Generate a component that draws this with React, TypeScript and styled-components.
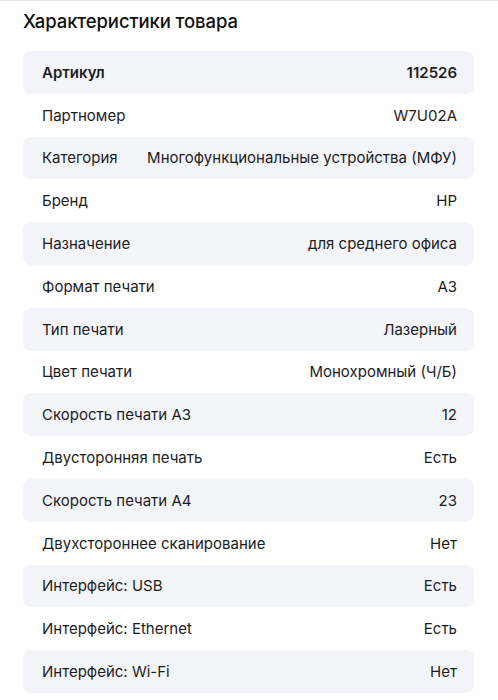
import React from "react";
import styled, { createGlobalStyle } from "styled-components";

const rows: [string, string][] = [
  ["Артикул", "112526"],
  ["Партномер", "W7U02A"],
  ["Категория", "Многофункциональные устройства (МФУ)"],
  ["Бренд", "HP"],
  ["Назначение", "для среднего офиса"],
  ["Формат печати", "A3"],
  ["Тип печати", "Лазерный"],
  ["Цвет печати", "Монохромный (Ч/Б)"],
  ["Скорость печати A3", "12"],
  ["Двусторонняя печать", "Есть"],
  ["Скорость печати A4", "23"],
  ["Двухстороннее сканирование", "Нет"],
  ["Интерфейс: USB", "Есть"],
  ["Интерфейс: Ethernet", "Есть"],
  ["Интерфейс: Wi-Fi", "Нет"],
];

const App = () => {
  return (
    <>
      <GlobalStyle />
      <Page>
        <Title>Характеристики товара</Title>
        <List>
          {rows.map(([label, value], i) => (
            <Row key={label} $striped={i % 2 === 0}>
              <Label $bold={i === 0}>{label}</Label>
              <Value $bold={i === 0}>{value}</Value>
            </Row>
          ))}
        </List>
      </Page>
    </>
  );
};

export default App;

const GlobalStyle = createGlobalStyle`
  body {
    margin: 0;
    background: #fff;
    font-family: Inter, "Noto Sans", sans-serif;
    color: #1c1c1e;
  }
`;

const Page = styled.div`
  border-top: 1px solid #e6e6e6;
  padding: 0 24px 0 23px;
`;

const Title = styled.h2`
  margin: 0;
  padding-top: 9px;
  height: 50px;
  box-sizing: border-box;
  font-size: 18.5px;
  font-weight: 500;
  letter-spacing: -0.1px;
  color: #111;
`;

const List = styled.div`
  display: flex;
  flex-direction: column;
`;

const Row = styled.div<{ $striped: boolean }>`
  display: flex;
  align-items: center;
  justify-content: space-between;
  gap: 16px;
  height: 42.8px;
  padding: 0 17px 0 19px;
  border-radius: 8px;
  background: ${(p) => (p.$striped ? "#f3f5f9" : "transparent")};
  font-size: 15px;
`;

const Label = styled.span<{ $bold: boolean }>`
  font-weight: ${(p) => (p.$bold ? 600 : 400)};
  white-space: nowrap;
`;

const Value = styled.span<{ $bold: boolean }>`
  font-weight: ${(p) => (p.$bold ? 600 : 400)};
  text-align: right;
  white-space: nowrap;
`;
